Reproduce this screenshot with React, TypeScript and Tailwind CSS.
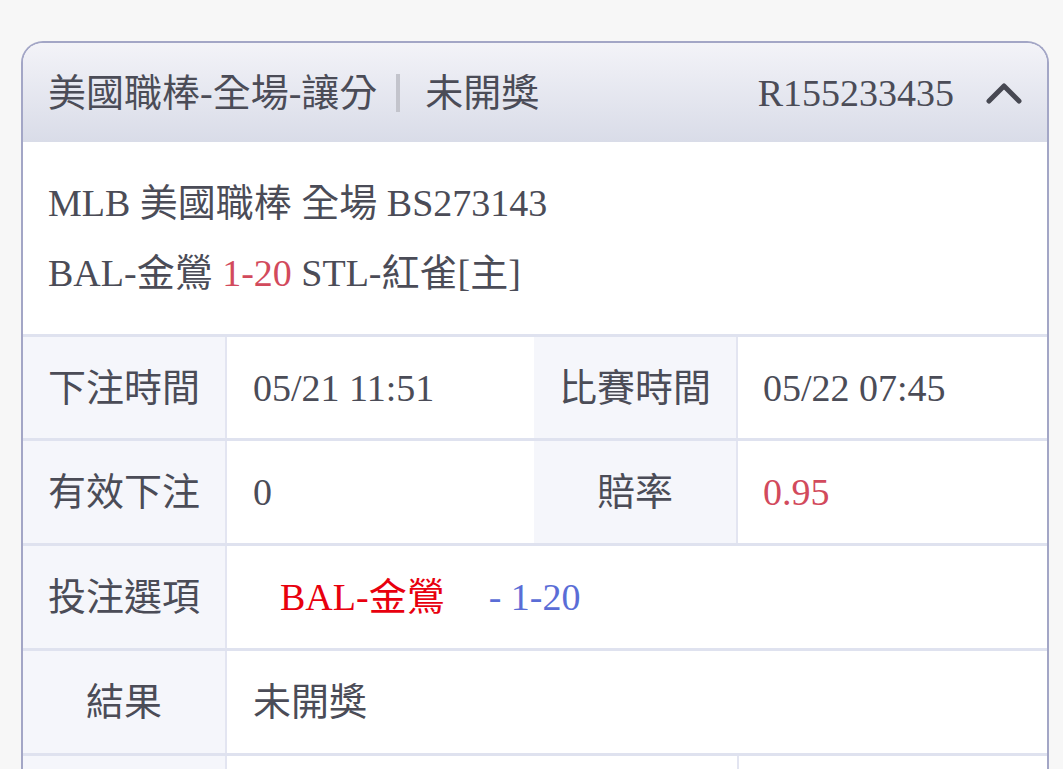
import React from "react";

const font = "font-['Liberation_Serif','Noto_Sans_CJK_TC',serif]";

function Label({ children }: { children: React.ReactNode }) {
  return (
    <div className="w-[204px] shrink-0 bg-[#f5f6fb] border-r-2 border-[#e3e5f1] flex items-center justify-center">
      {children}
    </div>
  );
}

export default function App() {
  return (
    <div className={`min-h-screen bg-[#f7f7f7] pt-[41px] text-[#4b4c57] text-[38px] leading-none ${font}`}>
      <div className="ml-[21px] w-[1028px] h-[728px] overflow-hidden rounded-t-[22px] border-2 border-b-0 border-[#a3a6c6] bg-white">
        {/* header */}
        <div className="h-[99px] flex items-center px-[25px] bg-gradient-to-b from-[#f3f3f8] to-[#d9dce8]">
          <span>美國職棒-全場-讓分</span>
          <span className="ml-[19px] w-[4px] h-[38px] bg-[#c3c4cc]" />
          <span className="ml-[25px]">未開獎</span>
          <span className="ml-auto">R155233435</span>
          <svg className="ml-[32px]" width="36" height="22" viewBox="0 0 36 22">
            <polyline points="3,19 18,4 33,19" fill="none" stroke="#474852" strokeWidth="5" strokeLinecap="round" strokeLinejoin="round" />
          </svg>
        </div>
        {/* info */}
        <div className="h-[192px] px-[25px] flex flex-col justify-center gap-[32px]">
          <div>MLB 美國職棒 全場 BS273143</div>
          <div>
            BAL-金鶯 <span className="text-[#d24a5c]">1-20</span> STL-紅雀[主]
          </div>
        </div>
        {/* table */}
        <div className="border-t-[3px] border-[#dfe2ef] h-[104px] flex">
          <Label>下注時間</Label>
          <div className="w-[307px] flex items-center pl-[26px]">05/21 11:51</div>
          <Label>比賽時間</Label>
          <div className="flex-1 flex items-center pl-[25px]">05/22 07:45</div>
        </div>
        <div className="border-t-[3px] border-[#dfe2ef] h-[105px] flex">
          <Label>有效下注</Label>
          <div className="w-[307px] flex items-center pl-[26px]">0</div>
          <Label>賠率</Label>
          <div className="flex-1 flex items-center pl-[25px] text-[#d24a5c]">0.95</div>
        </div>
        <div className="border-t-[3px] border-[#dfe2ef] h-[105px] flex">
          <Label>投注選項</Label>
          <div className="flex-1 flex items-center pl-[53px]">
            <span className="text-[#e8000e]">BAL-金鶯</span>
            <span className="ml-[44px] text-[#5a6dd6]">- 1-20</span>
          </div>
        </div>
        <div className="border-t-[3px] border-[#dfe2ef] h-[105px] flex">
          <Label>結果</Label>
          <div className="flex-1 flex items-center pl-[26px]">未開獎</div>
        </div>
        <div className="border-t-[3px] border-[#dfe2ef] h-[105px] flex">
          <div className="w-[204px] shrink-0 bg-[#f5f6fb] border-r-2 border-[#e3e5f1]" />
          <div className="w-[307px]" />
          <div className="w-[205px] border-r-2 border-[#e3e5f1]" />
          <div className="flex-1" />
        </div>
      </div>
    </div>
  );
}
